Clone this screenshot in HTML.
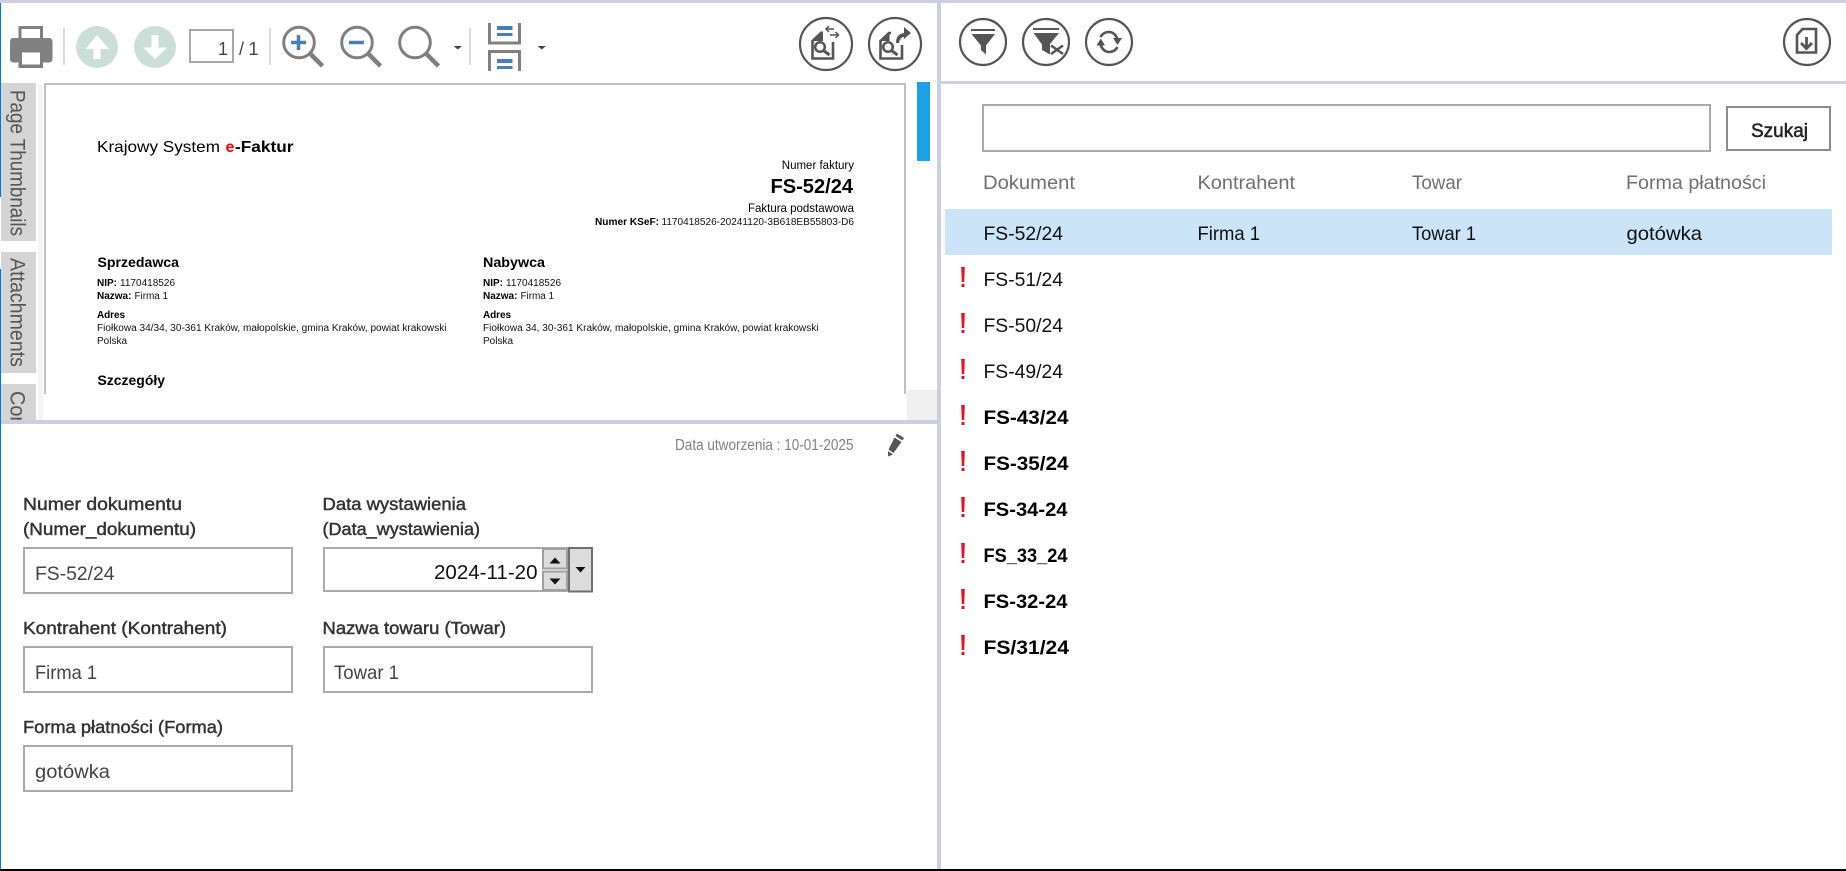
<!DOCTYPE html>
<html lang="pl"><head><meta charset="utf-8"><title>KSeF</title>
<style>
html,body{margin:0;padding:0;background:#fff;width:1846px;height:871px;overflow:hidden}
svg{display:block}
text{font-family:"Liberation Sans",sans-serif;white-space:pre}
.lab{font-size:17.5px;fill:#333;stroke:#333;stroke-width:.45px}
.val{font-size:19.5px;fill:#444}
.row{font-size:19.5px;fill:#111}
.b{font-size:19.5px;fill:#000;font-weight:bold}
.hd{font-size:19.5px;fill:#707070}
.tab{font-size:21px;fill:#555}
.s{font-size:10px;fill:#111}
.sb{font-size:10px;fill:#000;font-weight:bold}
.h{font-size:14px;fill:#000;font-weight:bold}
.ic{fill:none;stroke:#555;stroke-width:2.2}
</style></head><body>
<svg width="1846" height="871" viewBox="0 0 1846 871" xmlns="http://www.w3.org/2000/svg">
<defs><clipPath id="lc"><rect x="0" y="0" width="937" height="420"/></clipPath></defs>
<rect width="1846" height="871" fill="#fff"/>

<!-- printer -->
<g fill="#808080">
<path d="M13 38H49Q52.500 38 52.500 42V59Q52.500 62.500 49 62.500H13.500Q10 62.500 10 59V42Q10 38 13 38Z"/>
<path d="M18.500 39V26H43V39H40V29H21.500V39Z"/>
<path d="M18.500 50H43V68H18.500Z"/>
</g>
<path d="M22 52.500H40V64.500H22Z" fill="#fff"/>
<rect x="63" y="28" width="2" height="37" fill="#dadada"/>
<!-- up / down -->
<circle cx="97" cy="47" r="21" fill="#cbdfd8"/>
<path d="M97 35L109 49H100.500V59H93.500V49H85.500Z" fill="#fff"/>
<circle cx="155" cy="47" r="21" fill="#cbdfd8"/>
<path d="M155 59L143 47.500H151.500V35H158.500V47.500H167Z" fill="#fff"/>
<!-- page -->
<rect x="190" y="30" width="43" height="32" fill="#fff" stroke="#a8a8a8" stroke-width="2"/>
<text x="218" y="55" font-size="18" fill="#444" textLength="6">1</text>
<text x="239" y="55" font-size="18" fill="#444" textLength="19.500">/ 1</text>
<rect x="269" y="28" width="2" height="37" fill="#dadada"/>
<!-- zoom -->
<g fill="none" stroke="#7f7f7f">
<circle cx="299" cy="42.500" r="15.300" stroke-width="3"/><path d="M309.500 53L322.500 66" stroke-width="4.500"/>
<circle cx="357" cy="42.500" r="15.300" stroke-width="3"/><path d="M367.500 53L380.500 66" stroke-width="4.500"/>
<circle cx="415" cy="42.500" r="15.300" stroke-width="3"/><path d="M425.500 53L438.500 66" stroke-width="4.500"/>
</g>
<path d="M291 42.500H306M298.500 35V50M349 42.500H364" stroke="#4a7ebb" stroke-width="3.500" fill="none"/>
<path d="M453.500 46H462L457.750 49.500Z M537.500 46H546L541.750 49.500Z" fill="#444"/>
<rect x="469" y="28" width="2" height="37" fill="#dadada"/>
<!-- layout -->
<path d="M489.500 23V43H519.500V23M489.500 71V51.500H519.500V71" fill="none" stroke="#808080" stroke-width="3"/>
<path d="M497 26H512.500V30H497ZM497 33H512.500V36H497ZM497 59H512.500V63H497ZM497 66H512.500V69H497Z" fill="#4a7ebb"/>

<!-- right toolbar icons left pane -->
<g class="ic"><circle cx="826" cy="44" r="26"/><circle cx="895" cy="44" r="26"/></g>
<g fill="none" stroke="#555">
<path d="M822 32L812.500 41V58.500H833V42" stroke-width="2.600"/>
<circle cx="820" cy="47" r="4.800" stroke-width="2.500"/><path d="M823.500 50.500L829.500 55" stroke-width="3"/>
<path d="M834 29H826M829 26L826 29L829 32M830 35H838M835.500 32L838.500 35L835.500 38" stroke-width="1.500"/>
<path d="M891 33H889L880.500 41V58.500H902V45" stroke-width="2.600"/>
<circle cx="888" cy="47" r="4.800" stroke-width="2.500"/><path d="M891.500 50.500L897.500 55" stroke-width="3"/>
</g>
<path d="M823 31V41H812Z M889.500 32V41H880.500Z" fill="#555"/>
<path d="M896 43Q896 34 904 33V27L911 33L904 39V37Q900 37 899 43Z" fill="#555"/>

<!-- left tabs -->
<rect x="1" y="83" width="35" height="158" fill="#d4d4d4"/>
<rect x="1" y="252" width="35" height="121" fill="#d4d4d4"/>
<rect x="1" y="384" width="35" height="36" fill="#d4d4d4"/>
<text class="tab" transform="translate(10.500 90) rotate(90)" textLength="146" lengthAdjust="spacingAndGlyphs">Page Thumbnails</text>
<text class="tab" transform="translate(10.500 258) rotate(90)" textLength="109" lengthAdjust="spacingAndGlyphs">Attachments</text>
<g clip-path="url(#lc)"><text class="tab" transform="translate(10.500 391) rotate(90)" textLength="32" lengthAdjust="spacingAndGlyphs">Cor</text></g>

<!-- doc area -->
<rect x="38" y="85" width="5" height="335" fill="#f5f5f5"/>
<path d="M45 394V84H905V394" fill="none" stroke="#c0c0c0" stroke-width="2"/>
<rect x="917" y="82" width="13" height="79" fill="#1ca1e6"/>
<rect x="907" y="390" width="30" height="30" fill="#f0f0f0"/>

<text x="97" y="152" font-size="16" fill="#000" textLength="123" lengthAdjust="spacingAndGlyphs">Krajowy System</text>
<text x="225.500" y="152" font-size="16" fill="#f00" font-weight="bold" textLength="9.500">e</text>
<text x="235" y="152" font-size="16" fill="#000" font-weight="bold" textLength="58.500" lengthAdjust="spacingAndGlyphs">-Faktur</text>
<text x="854" y="169" font-size="11.500" fill="#000" text-anchor="end">Numer faktury</text>
<text x="770.500" y="193" font-size="20" fill="#000" font-weight="bold" textLength="82.500" lengthAdjust="spacingAndGlyphs">FS-52/24</text>
<text x="748" y="212" font-size="12" fill="#000" textLength="106" lengthAdjust="spacingAndGlyphs">Faktura podstawowa</text>
<text x="595" y="225" class="sb" textLength="64" lengthAdjust="spacingAndGlyphs">Numer KSeF:</text>
<text x="661.500" y="225" class="s" textLength="192.500" lengthAdjust="spacingAndGlyphs">1170418526-20241120-3B618EB55803-D6</text>

<text x="97.500" y="267" class="h" textLength="81.500" lengthAdjust="spacingAndGlyphs">Sprzedawca</text>
<text x="97" y="286" class="sb">NIP:</text><text x="120" y="286" class="s" textLength="55">1170418526</text>
<text x="97" y="299" class="sb">Nazwa:</text><text x="134.500" y="299" class="s" textLength="33.500">Firma 1</text>
<text x="97" y="318" class="sb" textLength="28">Adres</text>
<text x="97" y="331" class="s" textLength="349.500" lengthAdjust="spacingAndGlyphs">Fiołkowa 34/34, 30-361 Kraków, małopolskie, gmina Kraków, powiat krakowski</text>
<text x="97" y="344" class="s" textLength="30">Polska</text>
<text x="97.500" y="385" class="h" textLength="67.500" lengthAdjust="spacingAndGlyphs">Szczegóły</text>

<text x="483" y="267" class="h" textLength="62" lengthAdjust="spacingAndGlyphs">Nabywca</text>
<text x="483" y="286" class="sb">NIP:</text><text x="506" y="286" class="s" textLength="55">1170418526</text>
<text x="483" y="299" class="sb">Nazwa:</text><text x="520.500" y="299" class="s" textLength="33.500">Firma 1</text>
<text x="483" y="318" class="sb" textLength="28">Adres</text>
<text x="483" y="331" class="s" textLength="335.500" lengthAdjust="spacingAndGlyphs">Fiołkowa 34, 30-361 Kraków, małopolskie, gmina Kraków, powiat krakowski</text>
<text x="483" y="344" class="s" textLength="30">Polska</text>

<!-- dividers -->
<rect x="0" y="0" width="1846" height="3" fill="#cbcfe0"/>
<rect x="1" y="420" width="936" height="4" fill="#cbcfe0"/>
<rect x="937" y="0" width="4" height="869" fill="#cbcfe0"/>
<rect x="941" y="81" width="905" height="3" fill="#cbcfe0"/>
<rect x="0" y="3" width="1" height="194" fill="#0078d7"/>
<rect x="0" y="269" width="1" height="600" fill="#0078d7"/>
<rect x="0" y="869" width="1846" height="2" fill="#000"/>

<!-- created -->
<text x="675" y="450" font-size="15.500" fill="#808080" textLength="178.500" lengthAdjust="spacingAndGlyphs">Data utworzenia : 10-01-2025</text>
<path d="M897 433.500L904 438L902.500 440.500L895.500 436Z M894.500 437.500L901.500 442L893.500 453L888.500 449.500Z M888 451L893 454.500L888 456.500Z" fill="#555"/>

<!-- form -->
<text x="23" y="510" class="lab" textLength="159" lengthAdjust="spacingAndGlyphs">Numer dokumentu</text>
<text x="23" y="535" class="lab" textLength="173" lengthAdjust="spacingAndGlyphs">(Numer_dokumentu)</text>
<text x="322.500" y="510" class="lab" textLength="143.500" lengthAdjust="spacingAndGlyphs">Data wystawienia</text>
<text x="322.500" y="535" class="lab" textLength="157.500" lengthAdjust="spacingAndGlyphs">(Data_wystawienia)</text>
<text x="23" y="634" class="lab" textLength="204" lengthAdjust="spacingAndGlyphs">Kontrahent (Kontrahent)</text>
<text x="322.500" y="634" class="lab" textLength="183.500" lengthAdjust="spacingAndGlyphs">Nazwa towaru (Towar)</text>
<text x="23" y="733" class="lab" textLength="200" lengthAdjust="spacingAndGlyphs">Forma płatności (Forma)</text>
<g fill="#fff" stroke="#a9a9ae" stroke-width="2">
<rect x="24" y="548" width="268" height="45"/>
<rect x="324" y="548" width="244" height="43"/>
<rect x="24" y="647" width="268" height="45"/>
<rect x="324" y="647" width="268" height="45"/>
<rect x="24" y="746" width="268" height="45"/>
</g>
<text x="35" y="580" class="val" textLength="79.500" lengthAdjust="spacingAndGlyphs">FS-52/24</text>
<text x="434" y="579" font-size="20" fill="#111" textLength="103.500" lengthAdjust="spacingAndGlyphs">2024-11-20</text>
<text x="35" y="679" class="val" textLength="62" lengthAdjust="spacingAndGlyphs">Firma 1</text>
<text x="334" y="679" class="val" textLength="65" lengthAdjust="spacingAndGlyphs">Towar 1</text>
<text x="35" y="778" class="val" textLength="75" lengthAdjust="spacingAndGlyphs">gotówka</text>
<rect x="543" y="549" width="24" height="19.500" fill="#dcdcdc" stroke="#a0a0a0" stroke-width="2"/>
<rect x="543" y="571.500" width="24" height="18.500" fill="#dcdcdc" stroke="#a0a0a0" stroke-width="2"/>
<path d="M555 557.500L560.500 563.500H549.500Z M555 584.500L560.500 578.500H549.500Z" fill="#111"/>
<rect x="569" y="548" width="23" height="43.500" fill="#dcdcdc" stroke="#707070" stroke-width="2"/>
<path d="M580.500 572.500L575.500 567H585.500Z" fill="#111"/>

<!-- right toolbar -->
<g class="ic">
<circle cx="983" cy="42" r="23"/><circle cx="1046" cy="42" r="23"/><circle cx="1109" cy="42" r="23"/><circle cx="1807" cy="42" r="23"/>
</g>
<path d="M971 30H995M1033 29H1059" stroke="#555" stroke-width="2" fill="none"/>
<path d="M971.500 34H995L986 45.500V54.500L981 50V45.500Z" fill="#555"/>
<path d="M1033.500 33H1059L1050 44V54.500L1042 50V44.500Z" fill="#555"/>
<path d="M1051 45.500L1063 54M1063 45.500L1051 54" stroke="#555" stroke-width="2.500" fill="none"/>
<g fill="none" stroke="#555" stroke-width="2.600">
<path d="M1100.500 37Q1103 32 1109 32Q1114.500 32 1117.500 39"/>
<path d="M1117.500 47Q1115 52 1109 52Q1103.500 52 1100.500 45"/>
</g>
<path d="M1113 38H1122L1117.500 45Z M1096.500 45.500H1105L1100.800 38.500Z" fill="#555"/>
<path d="M1802.500 29H1816V52.500H1797V35Z" fill="none" stroke="#555" stroke-width="2.600"/>
<path d="M1806.500 37V48M1801 43L1806.500 48.500L1812 43" fill="none" stroke="#555" stroke-width="2.800"/>

<!-- search -->
<rect x="983" y="105" width="727" height="46" fill="#fff" stroke="#a9a9ae" stroke-width="2"/>
<rect x="1727" y="107" width="103" height="43" fill="#fff" stroke="#8c8c8c" stroke-width="2"/>
<text x="1751" y="137" font-size="19.500" fill="#222" stroke="#222" stroke-width=".5" textLength="57" lengthAdjust="spacingAndGlyphs">Szukaj</text>

<!-- table -->
<text x="983" y="189" class="hd" textLength="92" lengthAdjust="spacingAndGlyphs">Dokument</text>
<text x="1197.500" y="189" class="hd" textLength="97.500" lengthAdjust="spacingAndGlyphs">Kontrahent</text>
<text x="1412" y="189" class="hd" textLength="50" lengthAdjust="spacingAndGlyphs">Towar</text>
<text x="1626" y="189" class="hd" textLength="140" lengthAdjust="spacingAndGlyphs">Forma płatności</text>
<rect x="945" y="209" width="887" height="46" fill="#cce4f7"/>
<text x="983.500" y="240" class="row" textLength="79.500" lengthAdjust="spacingAndGlyphs">FS-52/24</text>
<text x="1197.500" y="240" class="row" textLength="62.500" lengthAdjust="spacingAndGlyphs">Firma 1</text>
<text x="1412" y="240" class="row" textLength="64" lengthAdjust="spacingAndGlyphs">Towar 1</text>
<text x="1626.500" y="240" class="row" textLength="75.500" lengthAdjust="spacingAndGlyphs">gotówka</text>
<text x="983.500" y="286" class="row" textLength="79.500" lengthAdjust="spacingAndGlyphs">FS-51/24</text>
<text x="983.500" y="332" class="row" textLength="79.500" lengthAdjust="spacingAndGlyphs">FS-50/24</text>
<text x="983.500" y="378" class="row" textLength="79.500" lengthAdjust="spacingAndGlyphs">FS-49/24</text>
<text x="983.500" y="424" class="b" textLength="85" lengthAdjust="spacingAndGlyphs">FS-43/24</text>
<text x="983.500" y="470" class="b" textLength="85" lengthAdjust="spacingAndGlyphs">FS-35/24</text>
<text x="983.500" y="516" class="b" textLength="84" lengthAdjust="spacingAndGlyphs">FS-34-24</text>
<text x="983.500" y="562" class="b" textLength="84" lengthAdjust="spacingAndGlyphs">FS_33_24</text>
<text x="983.500" y="608" class="b" textLength="84" lengthAdjust="spacingAndGlyphs">FS-32-24</text>
<text x="983.500" y="654" class="b" textLength="85.500" lengthAdjust="spacingAndGlyphs">FS/31/24</text>
<g fill="#e81123">
<path d="M961.200 267H964.800L964.200 282H961.800ZM961.500 284H964.500V287H961.500Z"/>
<path d="M961.200 313H964.800L964.200 328H961.800ZM961.500 330H964.500V333H961.500Z"/>
<path d="M961.200 359H964.800L964.200 374H961.800ZM961.500 376H964.500V379H961.500Z"/>
<path d="M961.200 405H964.800L964.200 420H961.800ZM961.500 422H964.500V425H961.500Z"/>
<path d="M961.200 451H964.800L964.200 466H961.800ZM961.500 468H964.500V471H961.500Z"/>
<path d="M961.200 497H964.800L964.200 512H961.800ZM961.500 514H964.500V517H961.500Z"/>
<path d="M961.200 543H964.800L964.200 558H961.800ZM961.500 560H964.500V563H961.500Z"/>
<path d="M961.200 589H964.800L964.200 604H961.800ZM961.500 606H964.500V609H961.500Z"/>
<path d="M961.200 635H964.800L964.200 650H961.800ZM961.500 652H964.500V655H961.500Z"/>
</g>
</svg>
</body></html>
